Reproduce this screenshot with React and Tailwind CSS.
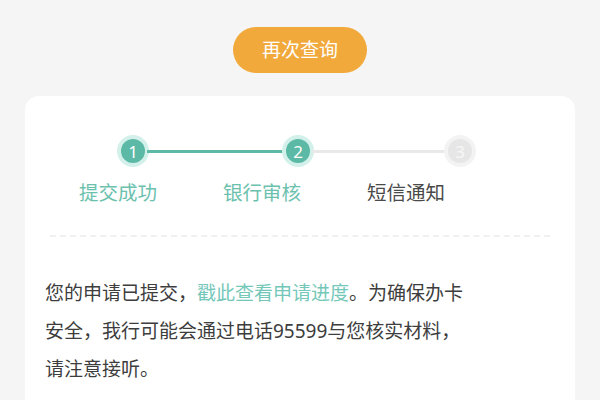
const Step = ({ n, active }) => (
  <div
    className={`flex h-[32px] w-[32px] shrink-0 items-center justify-center rounded-full ${
      active ? "bg-[#d3f0ea]" : "bg-[#f3f3f3]"
    }`}
  >
    <div
      className={`flex h-[24px] w-[24px] items-center justify-center rounded-full text-[17px] leading-none ${
        active ? "bg-[#5bb9a5] text-white" : "bg-[#e6e6e6] text-[#f7f7f7]"
      }`}
    >
      {n}
    </div>
  </div>
);

export default function App() {
  return (
    <div
      className="h-[400px] w-[600px] overflow-hidden bg-[#f5f5f5]"
      style={{ fontFamily: '"Noto Sans", "Noto Sans CJK SC", sans-serif' }}
    >
      {/* top line, mostly cut off */}
      <div className="-mt-[22px] h-[27px] text-center text-[19px] leading-[27px] text-[#c9c9c9]">
        您的申请已成功提交，请耐心等待审核结果
      </div>

      <div className="mt-[22px] flex justify-center">
        <button className="h-[46px] w-[134px] rounded-full bg-[#f2a93b] text-[19px] text-white">
          再次查询
        </button>
      </div>

      <div className="mx-[25px] mt-[23px] h-[400px] rounded-[14px] bg-white pt-[39px]">
        {/* progress */}
        <div className="flex items-center pl-[92px]">
          <Step n="1" active />
          <div className="h-[3px] w-[137px] -mx-[2px] bg-[#5bb9a5]" />
          <Step n="2" active />
          <div className="h-[3px] w-[134px] -mx-[2px] bg-[#e9e9e9]" />
          <Step n="3" />
        </div>

        <div className="mt-[13px] flex gap-[66px] pl-[54px] text-[19.5px] leading-[26px]">
          <span className="text-[#6cc1ae]">提交成功</span>
          <span className="text-[#6cc1ae]">银行审核</span>
          <span className="text-[#4a4a4a]">短信通知</span>
        </div>

        <div className="mx-[25px] mt-[29px] border-t-2 border-dashed border-[#f0f0f0]" />

        <p className="mt-[37px] w-[445px] pl-[20px] text-[19px] leading-[38px] text-[#3d3d3d]">
          您的申请已提交，
          <span className="text-[#74c7b9]">戳此查看申请进度</span>
          。为确保办卡安全，我行可能会通过电话95599与您核实材料，请注意接听。
        </p>
      </div>
    </div>
  );
}
